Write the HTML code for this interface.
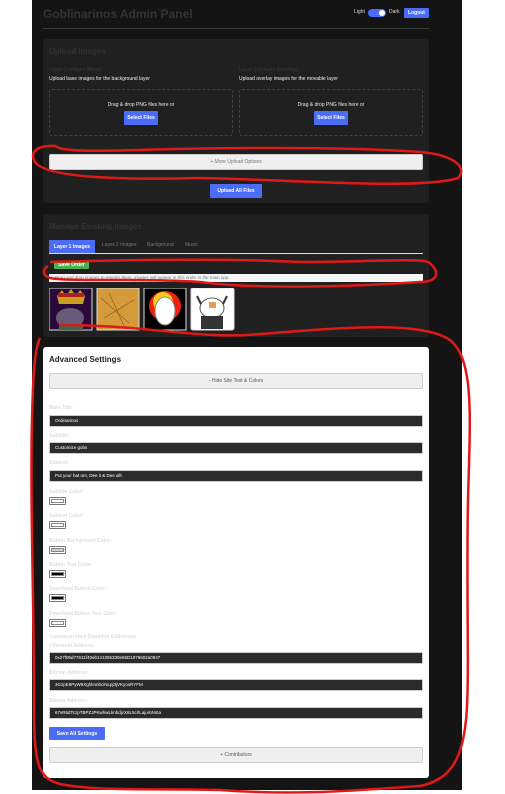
<!DOCTYPE html>
<html><head><meta charset="utf-8"><style>
*{box-sizing:border-box;margin:0;padding:0}
body{width:505px;height:794px;background:#fff;font-family:"Liberation Sans",sans-serif;position:relative;overflow:hidden}
.a{position:absolute}
.t{font-size:5px;white-space:nowrap}
.btn{position:absolute;background:#4a6cf7;color:#fff;font-size:5px;font-weight:bold;display:flex;align-items:center;justify-content:center;border-radius:1px}
.dz{position:absolute;border:1px dashed #444;border-radius:3px}
.lbl{position:absolute;left:49px;font-size:5px;color:#ddd;font-weight:bold}
.inp{position:absolute;left:49px;width:374px;height:12px;background:#2b2b2b;border:1px solid #ccc;color:#fff;font-size:4.5px;padding-left:5px;line-height:10px}
.sw{position:absolute;left:49px;width:17px;height:8px;border:1px solid #777;border-radius:1px;padding:1px}
.sw div{width:100%;height:100%;border:1px solid #888}
.gb{position:absolute;left:49px;width:374px;background:#efefef;border:1px solid #ccc;border-radius:2px;font-size:5px;color:#555;display:flex;align-items:center;justify-content:center}
</style></head><body>
<div class="a" style="left:32px;top:0;width:430px;height:790px;background:#141414"></div>
<div class="a" style="left:43px;top:7px;font-size:12px;font-weight:bold;color:#333">Goblinarinos Admin Panel</div>
<div class="a t" style="left:354px;top:9px;color:#ddd">Light</div>
<div class="a" style="left:368px;top:9px;width:18px;height:8px;border-radius:4px;background:#4a6cf7"><div class="a" style="right:1px;top:1px;width:6px;height:6px;border-radius:3px;background:#fff"></div></div>
<div class="a t" style="left:389px;top:9px;color:#ddd">Dark</div>
<div class="btn" style="left:404px;top:8px;width:25px;height:10px">Logout</div>
<div class="a" style="left:43px;top:28px;width:386px;height:1px;background:#3a3a3a"></div>

<div class="a" style="left:43px;top:39px;width:386px;height:164px;background:#202020;border-radius:3px"></div>
<div class="a" style="left:49px;top:47px;font-size:8px;font-weight:bold;color:#333">Upload Images</div>
<div class="a t" style="left:49px;top:67px;color:#333;font-weight:bold">Layer 1 Images (Base)</div>
<div class="a t" style="left:49px;top:76px;color:#eee">Upload base images for the background layer</div>
<div class="a t" style="left:239px;top:67px;color:#333;font-weight:bold">Layer 2 Images (Overlay)</div>
<div class="a t" style="left:239px;top:76px;color:#eee">Upload overlay images for the movable layer</div>
<div class="dz" style="left:49px;top:89px;width:184px;height:47px"></div>
<div class="dz" style="left:239px;top:89px;width:184px;height:47px"></div>
<div class="a t" style="left:49px;width:184px;top:102px;text-align:center;color:#eee">Drag &amp; drop PNG files here or</div>
<div class="a t" style="left:239px;width:184px;top:102px;text-align:center;color:#eee">Drag &amp; drop PNG files here or</div>
<div class="btn" style="left:124px;top:111px;width:34px;height:14px">Select Files</div>
<div class="btn" style="left:314px;top:111px;width:34px;height:14px">Select Files</div>
<div class="gb" style="top:154px;height:16px;color:#777">+ More Upload Options</div>
<div class="btn" style="left:210px;top:184px;width:52px;height:14px">Upload All Files</div>

<div class="a" style="left:43px;top:214px;width:386px;height:123px;background:#202020;border-radius:3px"></div>
<div class="a" style="left:49px;top:222px;font-size:8px;font-weight:bold;color:#333">Manage Existing Images</div>
<div class="btn" style="left:49px;top:240px;width:46px;height:13px;border-radius:0">Layer 1 Images</div>
<div class="a t" style="left:102px;top:242px;color:#777">Layer 2 Images</div>
<div class="a t" style="left:147px;top:242px;color:#777">Background</div>
<div class="a t" style="left:185px;top:242px;color:#777">Music</div>
<div class="a" style="left:49px;top:253px;width:374px;height:1px;background:#ddd"></div>
<div class="btn" style="left:54px;top:261px;width:35px;height:8px;background:#4caf50">Save Order</div>
<div class="a" style="left:49px;top:274px;width:374px;height:8px;background:#f5f6f8;font-size:4.5px;font-style:italic;color:#777;padding-left:6px;line-height:8px">Drag and drop images to reorder them. Images will appear in this order in the main app.</div>
<svg class="a" style="left:49px;top:288px" width="190" height="43">
<rect x="0" y="0" width="43" height="42" fill="#2a0a3a" stroke="#ddd" stroke-width="1"/>
<ellipse cx="21" cy="30" rx="14" ry="10" fill="#6a5a7a"/><rect x="10" y="36" width="24" height="6" fill="#3a6a4a"/><path d="M8 8 L13 2 L17 8 L22 1 L27 8 L31 2 L36 8 L34 16 L10 16Z" fill="#c8a020"/><rect x="9" y="5" width="26" height="4" fill="#b02020"/>
<rect x="48" y="0" width="42" height="42" fill="#d59a3a" stroke="#ddd"/><path d="M52 10 L80 35 M60 5 L75 38 M55 30 L85 12" stroke="#8a5a20" stroke-width=".6"/>
<rect x="95" y="0" width="42" height="42" fill="#000" stroke="#ddd"/><ellipse cx="116" cy="18" rx="16" ry="15" fill="#f02010"/><ellipse cx="114" cy="14" rx="10" ry="10" fill="#ffcc20"/><ellipse cx="116" cy="23" rx="10" ry="14" fill="#fff" stroke="#888"/>
<rect x="142" y="0" width="43" height="42" rx="2" fill="#fff" stroke="#ddd"/><ellipse cx="163" cy="20" rx="12" ry="10" fill="#fff" stroke="#555"/><rect x="160" y="14" width="7" height="6" fill="#e0a050"/><rect x="152" y="28" width="22" height="13" fill="#333"/><path d="M148 8 L152 16 M178 8 L174 16" stroke="#333" stroke-width="2"/>
</svg>

<div class="a" style="left:43px;top:347px;width:386px;height:431px;background:#fff;border-radius:3px"></div>
<div class="a" style="left:49px;top:355px;font-size:8px;font-weight:bold;color:#222">Advanced Settings</div>
<div class="gb" style="top:373px;height:16px">- Hide Site Text &amp; Colors</div>
<div class="lbl" style="top:405px">Main Title:</div><div class="inp" style="top:415px">Ordinarinos</div>
<div class="lbl" style="top:433px">Subtitle:</div><div class="inp" style="top:442px">Customize gobs</div>
<div class="lbl" style="top:460px">Subtext:</div><div class="inp" style="top:470px">Put your hat on!, Dee it &amp; Dee all!</div>
<div class="lbl" style="top:489px">Subtitle Color:</div><div class="sw" style="top:497px"><div></div></div>
<div class="lbl" style="top:513px">Subtext Color:</div><div class="sw" style="top:521px"><div></div></div>
<div class="lbl" style="top:538px">Button Background Color:</div><div class="sw" style="top:546px"><div style="background:#c8d0d4"></div></div>
<div class="lbl" style="top:562px">Button Text Color:</div><div class="sw" style="top:570px"><div style="background:#000"></div></div>
<div class="lbl" style="top:586px">Download Button Color:</div><div class="sw" style="top:594px"><div style="background:#000"></div></div>
<div class="lbl" style="top:611px">Download Button Text Color:</div><div class="sw" style="top:619px"><div></div></div>
<div class="lbl" style="top:634px">Cryptocurrency Donation Addresses</div>
<div class="lbl" style="top:643px">Ethereum Address:</div><div class="inp" style="top:652px">0x27f05d77611f40eb141365330e65D1876602a0937</div>
<div class="lbl" style="top:670px">Bitcoin Address:</div><div class="inp" style="top:679px">3GzpE8PyW8XghknnbciNLpj3jVKyosRYFM</div>
<div class="lbl" style="top:698px">Solana Address:</div><div class="inp" style="top:707px">67sR6dTczpTBPZJPKwhwLknbdjcX6L5crlLajumNnta</div>
<div class="btn" style="left:49px;top:727px;width:56px;height:13px">Save All Settings</div>
<div class="gb" style="top:747px;height:16px">+ Contributors</div>

<svg class="a" style="left:0;top:0" width="505" height="794" fill="none" stroke="#e01818" stroke-width="2.5">
<path d="M56 146 C40 145 30 150 34 160 C40 178 120 180 200 178 C300 180 420 190 458 178 C468 168 455 155 420 152 C340 146 200 148 140 150 C100 151 60 152 56 146"/>
<path d="M50 262 C120 260 220 258 300 262 C360 262 420 258 428 262 C440 270 440 282 420 282 C360 286 260 290 200 282 C140 278 70 282 50 278 C42 275 42 270 48 266"/>
<path d="M60 325 C150 325 200 340 260 334 C340 328 420 320 450 340 C475 360 470 420 468 500 C466 600 470 680 466 720 C462 760 450 780 420 786 C360 790 300 796 220 790 C160 788 100 792 60 784 C36 778 34 760 34 700 C34 600 30 500 32 420 C33 380 34 350 40 338"/>
</svg>
</body></html>
